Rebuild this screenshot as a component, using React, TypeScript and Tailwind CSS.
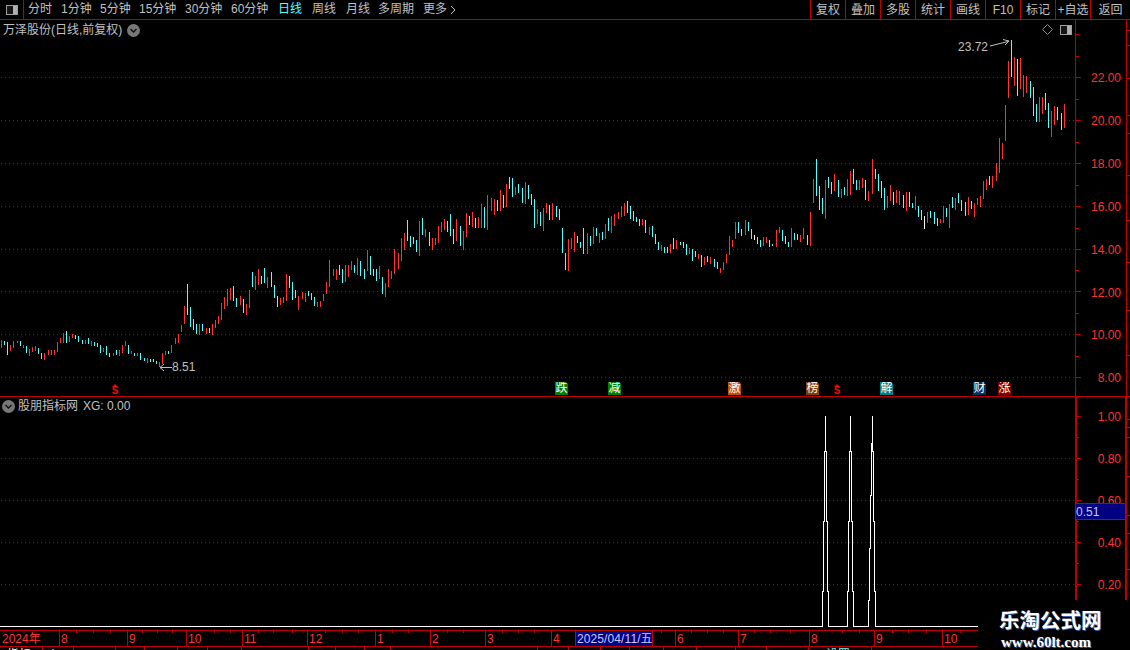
import React from "react";

const RED = "#ff3232";
const CYAN = "#54ffff";
const DOT = "#8c1010";

const seg1 =
  "4r480-503 13c484-496 22c487-525 31r495-513 40r483-503 52r484-488 61c483-497 70r495-503 79c497-519 88r507-527 97r502-517 106r498-513 115c504-521 124c519-537 133r519-540 145r510-525 154r510-525 163r510-525 172r487-516 181r474-489 190r459-489 199c453-489 208r468-486 217r462-474 226c465-477 235c468-486 247c480-492 256r480-492 265c474-492 274r483-498 283c486-498 292c489-501 301c495-519 310r504-516 319c498-525 328c519-531 340r519-528 349c510-525 358r510-528 367r495-519 376r483-498 385c495-522 394r513-522 403c519-528 412r519-528 421c519-540 433c534-543 442r534-549 451c537-546 460c537-546 469c543-552 478r546-561 487r519-552 496r513-525 505c513-522 514r495-519 526r474-492 535r462-489 544r435-456 553r378-432 562c312-405 571c381-441 580c417-450 589c432-462 598r432-465 607c432-453 619r444-462 628c444-459 637r432-465 646r420-444 655r408-432 664r369-420 673r351-387 682r327-378 691r324-360 700c318-363 709c354-381 721r348-375 730c357-399 739r372-405 748r330-384 757c276-321 766r288-330 775r267-315 784c288-312 793c264-309 802r291-324 814c276-321 823c315-354 832c348-381 841r354-375 850r351-369 859r282-363 868c288-324 877c306-360 886c330-354 895r348-390 907r336-357 916r339-366 925c333-348 934c339-360 943c351-378 952r366-381 961r363-381 970r342-363 979r306-342 988r240-321 1000r267-288 1009r267-300 1018c255-285 1027c267-309 1036r255-306 1045r255-291 1054r243-270 1063c255-279 1072r234-285 1081c243-288 1093c267-297 1102r210-273 1111c228-285 1120c267-288 1129c267-303 1138r258-297 1147c291-342 1156r309-351 1165r267-321 1174r273-297 1183r207-282 1195r219-267";

const seg2 =
  "4r234-303 13r219-270 22c180-243 31c228-261 40c231-252 49c240-276 58r183-288 67c174-225 76r207-231 87c216-258 97r234-270 106r234-255 115r198-249 124r186-216 133r177-210 142c183-216 151c162-228 160c207-252 169r177-243 181c198-258 190r213-270 199r159-231 208c168-195 217r156-201 226c174-204 235r171-204 244r132-204 253c141-204 262r105-210 274r114-153 283r117-165 292c120-153 301r90-153 310c105-144 319r72-141 328c51-87 337c54-111 346r81-105 355c72-99 367c84-129 376r66-132 385c75-117 394c102-135 403c117-204 412r147-192 421c156-198 430r144-213 439r129-159 448c135-180 457r129-180 469c138-171 478c147-180 487c204-279 496c279-330 505r237-333 514r234-267 523r216-276 532c228-249 541c246-264 550c204-282 562r219-282 571c228-258 580r201-252 589c204-228 598r219-249 607c216-240 616r192-237 625c174-213 634r168-219 643r162-198 655r156-177 664r138-171 673r129-168 682c123-159 691c138-177 700c153-183 709c171-186 718c177-198 727r177-195 736c180-219 748r201-225 757c198-231 766c222-252 775c246-270 784r255-273 793c261-279 802c261-279 811r252-279 820c234-267 829r240-267 841c246-255 850c246-264 859c252-285 868r264-282 877c267-303 886c273-291 895r282-297 904c285-321 913r291-315 922c288-306 931r291-312 943c297-321 952c306-327 961r324-339 970r306-330 979r282-309 988r228-285 997r240-261 1006r186-237 1015c186-219 1024c207-228 1036r180-225 1045c186-213 1054c207-237 1063w225-240 1072c231-252 1081c240-261 1090r231-258 1099r231-249 1108c240-261 1117c252-258 1129r210-261 1138r201-219 1147c210-243 1156c228-252 1165c246-261 1174r204-261 1183c219-240 1192c222-240";

const seg3 =
  "31r315-336 40r294-327 52c315-345 61r246-348 70r147-219 79c87-198 88c168-240 97c204-252 106r150-267 115c141-174 124c156-192 133r132-183 145c150-201 154r177-204 163c171-195 172r147-198 181r123-195 190c117-162 199c150-180 208r150-180 217r144-174 226c150-210 235r183-213 247r87-192 256c117-147 265c132-183 274c153-204 283c174-240 292r198-234 301r165-213 310c186-225 319r180-219 328r183-225 340c195-234 349r186-243 358c186-231 367c219-234 376r198-240 385c228-261 394c240-270 403w258-297 412r246-279 421c243-264 433c246-282 442c264-288 451r267-279 460r228-279 469c234-261 478r222-294 487c201-234 496r204-240 505c189-219 514c210-243 526c216-258 535r201-255 544c213-237 553r219-261 562r204-225 571r198-231 580r153-207 589r147-180 598c138-165 607r138-174 619r99-153 628r24-129 637r39-87";

const seg4 =
  "1005r105-141 1008r61-98 1011c40-77 1014r57-86 1017c59-96 1020r58-89 1023r75-97 1026r76-93 1030c81-98 1033c87-116 1036c104-122 1039r97-122 1042r97-114 1045c93-110 1048c103-128 1051r111-137 1054r106-125 1057c107-120 1061c113-130 1064r104-128";

type Bar = { x: number; y1: number; y2: number; c: string };

function parse(s: string, xo: number, yo: number, k: number): Bar[] {
  return s.split(" ").map((t) => {
    const m = t.match(/^(\d+)([rcw])(\d+)-(\d+)$/)!;
    const col = m[2] === "r" ? RED : m[2] === "c" ? CYAN : "#ffffff";
    return {
      x: Math.floor(xo + Number(m[1]) / k) + 0.5,
      y1: yo + Number(m[3]) / k,
      y2: yo + Number(m[4]) / k,
      c: col,
    };
  });
}

const bars: Bar[] = [
  ...parse(seg1, 0, 180, 3),
  ...parse(seg2, 400, 160, 3),
  ...parse(seg3, 790, 130, 3),
  ...parse(seg4, 0, 0, 1),
];

const upperGrid = [
  { y: 77, t: "22.00" },
  { y: 120, t: "20.00" },
  { y: 163, t: "18.00" },
  { y: 206, t: "16.00" },
  { y: 249, t: "14.00" },
  { y: 291.5, t: "12.00" },
  { y: 334, t: "10.00" },
  { y: 377, t: "8.00" },
];
const lowerGrid = [
  { y: 416, t: "1.00" },
  { y: 458, t: "0.80" },
  { y: 500, t: "0.60" },
  { y: 542, t: "0.40" },
  { y: 584, t: "0.20" },
];

const pulse = (a: number) => {
  const p = [
    [a - 3, 626.5],
    [a - 3, 591],
    [a - 2, 591],
    [a - 2, 521],
    [a - 1, 521],
    [a - 1, 451],
    [a, 451],
    [a, 416],
    [a, 451],
    [a + 1, 451],
    [a + 1, 521],
    [a + 2, 521],
    [a + 2, 591],
    [a + 3, 591],
    [a + 3, 626.5],
  ];
  return p.map((q) => q.join(",")).join(" ");
};
const line =
  "0,626.5 " +
  pulse(825.5) +
  " " +
  pulse(850.5) +
  " 868.5,626.5 868.5,600 869.5,600 869.5,548 870.5,548 870.5,495 871.5,495 871.5,443 872.5,443 872.5,416 872.5,451 873.5,451 873.5,521 874.5,521 874.5,591 875.5,591 875.5,626.5 978,626.5";

const menu = [
  { t: "分时", w: 33 },
  { t: "1分钟", w: 39 },
  { t: "5分钟", w: 39 },
  { t: "15分钟", w: 46 },
  { t: "30分钟", w: 46 },
  { t: "60分钟", w: 47 },
  { t: "日线", w: 34 },
  { t: "周线", w: 34 },
  { t: "月线", w: 32 },
  { t: "多周期", w: 45 },
  { t: "更多", w: 40 },
];
const tools = ["复权", "叠加", "多股", "统计", "画线", "F10", "标记", "+自选", "返回"];

const badges = [
  { t: "跌", x: 555, c: "bg-[#008000]" },
  { t: "减", x: 608, c: "bg-[#008000]" },
  { t: "激", x: 728, c: "bg-[#c04f10]" },
  { t: "榜", x: 806, c: "bg-[#804000]" },
  { t: "解", x: 880, c: "bg-[#008080]" },
  { t: "财", x: 973, c: "bg-[#003366]" },
  { t: "涨", x: 998, c: "bg-[#800000]" },
];

const months = [
  { t: "2024年", w: 59, first: true },
  { t: "8", w: 68 },
  { t: "9", w: 59 },
  { t: "10", w: 56 },
  { t: "11", w: 65 },
  { t: "12", w: 68 },
  { t: "1", w: 55 },
  { t: "2", w: 55 },
  { t: "3", w: 66 },
];
const monthsB = [
  { t: "6", w: 63 },
  { t: "7", w: 71 },
  { t: "8", w: 65 },
  { t: "9", w: 68 },
  { t: "10", w: 36 },
];
const minor = [76, 93, 110, 142, 157, 172, 214, 230, 258, 273, 292, 325, 342, 358, 392, 408, 447, 463, 502, 518, 534, 661, 691, 707, 723, 754, 770, 790, 842, 859, 892, 908, 926, 960];
const bottomSeps = [42, 73, 115, 144, 177, 207, 241, 308, 335, 364, 390, 537, 568, 600, 629, 663, 696, 735, 766, 808, 839, 871];

function Chevron() {
  return (
    <span className="flex h-[13px] w-[13px] items-center justify-center rounded-full bg-[#777777]">
      <svg width="9" height="9" viewBox="0 0 9 9">
        <path d="M1.5 3 L4.5 6 L7.5 3" fill="none" stroke="#111111" strokeWidth="1.4" />
      </svg>
    </span>
  );
}

function Toggle() {
  return (
    <svg width="12" height="10" viewBox="0 0 12 10" shapeRendering="crispEdges">
      <rect x="0.5" y="0.5" width="11" height="9" fill="#161616" stroke="#a0a0a0" />
      <rect x="7" y="1" width="4" height="8" fill="#b0b0b0" />
    </svg>
  );
}

function Axis({ grid, top, height, minorYs, thick, edge }: { grid: { y: number; t: string }[]; top: number; height: number; minorYs: number[]; thick: boolean; edge: number[] }) {
  return (
    <div className="relative w-[55px] shrink-0" style={{ height }}>
      <svg className="absolute inset-0" width="55" height={height} viewBox={`1075 ${top} 55 ${height}`} shapeRendering="crispEdges">
        <line x1={thick ? 1076 : 1075.5} x2={thick ? 1076 : 1075.5} y1={top} y2={top + height} stroke="#c00000" strokeWidth={thick ? 2 : 1} />
        <line x1={thick ? 1126 : 1126.5} x2={thick ? 1126 : 1126.5} y1={top} y2={top + height} stroke="#c00000" strokeWidth={thick ? 2 : 1} />
        {grid.map((g) => (
          <line key={g.t} x1="1076" x2="1081" y1={Math.floor(g.y) + 0.5} y2={Math.floor(g.y) + 0.5} stroke="#c00000" />
        ))}
        {minorYs.map((y) => (
          <line key={y} x1="1076" x2="1079" y1={y + 0.5} y2={y + 0.5} stroke="#c00000" />
        ))}
        {edge.map((y) => (
          <line key={y} x1="1127" x2="1130" y1={y + 0.5} y2={y + 0.5} stroke="#c00000" />
        ))}
      </svg>
      {grid.map((g) => (
        <span
          key={g.t}
          className="absolute right-[9px] text-[12px] leading-[14px] text-[#ff3232]"
          style={{ top: g.y - top - 6 }}
        >
          {g.t}
        </span>
      ))}
    </div>
  );
}

export default function App() {
  return (
    <div className="relative h-[650px] w-[1130px] overflow-hidden bg-black font-['Liberation_Sans','Noto_Sans_CJK_SC',sans-serif] text-[12px] text-[#c0c0c0]">
      {/* Top bar */}
      <div className="flex h-[20px] items-stretch border-b border-[#c00000]">
        <div className="flex w-[24px] shrink-0 items-center justify-center border-r border-[#c00000]">
          <Toggle />
        </div>
        <div className="flex items-center pl-[4px] leading-[19px]">
          {menu.map((m) => (
            <span
              key={m.t}
              className={`shrink-0 whitespace-nowrap ${m.t === "日线" ? "text-[#54ffff]" : ""}`}
              style={{ width: m.w }}
            >
              {m.t}
              {m.t === "更多" && (
                <svg className="ml-[3px] inline" width="6" height="10" viewBox="0 0 6 10">
                  <path d="M1 1 L5 5 L1 9" fill="none" stroke="#c0c0c0" />
                </svg>
              )}
            </span>
          ))}
        </div>
        <div className="ml-auto flex w-[320px] shrink-0">
          {tools.map((t) => (
            <span
              key={t}
              className="flex w-[35px] items-center justify-center whitespace-nowrap border-l border-[#c00000] last:w-[40px]"
            >
              {t}
            </span>
          ))}
        </div>
      </div>

      {/* Upper panel */}
      <div className="flex h-[377px] border-b border-[#c00000]">
        <div className="relative h-[376px] w-[1075px] shrink-0">
          <svg className="absolute inset-0" width="1075" height="376" viewBox="0 20 1075 376" shapeRendering="crispEdges">
            {upperGrid.map((g) => (
              <line key={g.y} x1="1" x2="1075" y1={Math.floor(g.y) + 0.5} y2={Math.floor(g.y) + 0.5} stroke={DOT} strokeDasharray="1 3" />
            ))}
            {bars.map((b, i) => (
              <line key={i} x1={b.x} x2={b.x} y1={b.y1} y2={b.y2} stroke={b.c} />
            ))}
            <g shapeRendering="auto" fill="none" stroke="#c0c0c0">
              <path d="M990 46 L1008 41.5 M1003 39.5 L1009 41 L1005 45" />
              <path d="M172 367.5 L160 367.5 M164 364 L160 367.5 L164 371" />
            </g>
          </svg>
          <div className="absolute left-[3px] top-[2px] flex items-center gap-[5px] leading-[16px]">
            <span>万泽股份(日线,前复权)</span>
            <Chevron />
          </div>
          <div className="absolute left-[1042px] top-[4px] flex items-center gap-[7px]">
            <svg width="11" height="11" viewBox="0 0 11 11">
              <path d="M5.5 0.5 L10.5 5.5 L5.5 10.5 L0.5 5.5 Z" fill="none" stroke="#8a8a8a" />
            </svg>
            <Toggle />
          </div>
          <span className="absolute left-[958px] top-[20px] leading-[14px]">23.72</span>
          <span className="absolute left-[172px] top-[340px] leading-[14px]">8.51</span>
          {badges.map((b) => (
            <span
              key={b.t}
              className={`absolute top-[362px] flex h-[13px] w-[13px] items-center justify-center text-[12px] leading-[13px] text-white [clip-path:polygon(0_0,85%_0,100%_15%,100%_100%,0_100%)] ${b.c}`}
              style={{ left: b.x }}
            >
              {b.t}
            </span>
          ))}
          {[115, 837].map((x) => (
            <span
              key={x}
              className="absolute top-[364px] flex w-[8px] flex-col items-center text-[10px] font-bold leading-[8px] text-[#ff0000]"
              style={{ left: x - 4 }}
            >
              <svg width="6" height="3" viewBox="0 0 6 3">
                <path d="M3 0 L6 3 L0 3 Z" fill="#ff0000" />
              </svg>
              <span>S</span>
            </span>
          ))}
        </div>
        <Axis
          grid={upperGrid}
          top={20}
          height={376}
          minorYs={[34, 56, 99, 142, 185, 228, 270, 313, 356]}
          thick={false}
          edge={[30, 45, 78, 115, 133, 175, 220, 262, 310, 355]}
        />
      </div>

      {/* Lower panel */}
      <div className="flex h-[233px]">
        <div className="relative h-[233px] w-[1075px] shrink-0">
          <svg className="absolute inset-0" width="1075" height="233" viewBox="0 397 1075 233" shapeRendering="crispEdges">
            {lowerGrid.slice(1).map((g) => (
              <line key={g.y} x1="1" x2="1075" y1={g.y + 0.5} y2={g.y + 0.5} stroke={DOT} strokeDasharray="1 3" />
            ))}
            <polyline points={line} fill="none" stroke="#ffffff" />
          </svg>
          <div className="absolute left-[2px] top-[1px] flex items-center gap-[3px] leading-[16px]">
            <Chevron />
            <span>股朋指标网</span>
            <span className="ml-[2px]">XG: 0.00</span>
          </div>
        </div>
        <div className="relative">
          <Axis
            grid={lowerGrid}
            top={397}
            height={233}
            minorYs={[437, 479, 521, 563, 605]}
            thick={true}
            edge={[419, 427, 437, 476, 515, 533, 569]}
          />
          <span className="absolute left-[1px] top-[106px] flex h-[17px] w-[49px] items-center border-y border-[#c00000] bg-[#000080] text-[12px] leading-[14px] text-[#c8c8ff]">
            0.51
          </span>
        </div>
      </div>

      {/* Time axis */}
      <div className="relative flex h-[17px] w-[978px] items-stretch border-y border-[#c00000] text-[12px] leading-[17px] text-[#ff3232]">
        {minor.map((x) => (
          <i key={x} className="absolute top-0 h-[2px] w-px bg-[#c00000]" style={{ left: x }} />
        ))}
        {months.map((m, i) => (
          <span
            key={i}
            className={`shrink-0 ${m.first ? "pl-[2px]" : "border-l border-[#c00000] pl-[1px]"}`}
            style={{ width: m.w }}
          >
            {m.t}
          </span>
        ))}
        <span className="w-[24px] shrink-0 border-l border-[#c00000] pl-[1px]">4</span>
        <span className="w-[78px] shrink-0 whitespace-nowrap border-x border-[#c00000] bg-[#000080] pl-[1px] tracking-[0.1px] text-[#c8c8ff]">
          2025/04/11/五
        </span>
        <span className="w-[22px] shrink-0" />
        {monthsB.map((m, i) => (
          <span key={i} className="shrink-0 border-l border-[#c00000] pl-[1px]" style={{ width: m.w }}>
            {m.t}
          </span>
        ))}
      </div>

      {/* Clipped row under the time axis */}
      <div className="relative h-[3px] w-[978px] overflow-hidden leading-[14px] text-white">
        {bottomSeps.map((x) => (
          <i key={x} className="absolute top-0 h-[3px] w-px bg-[#c00000]" style={{ left: x }} />
        ))}
        <span className="absolute left-[7px] top-[1px]">指标</span>
        <span className="absolute left-[48px] top-[1px]">卜</span>
        <span className="absolute left-[826px] top-[1px] text-[#54ffff]">设置</span>
      </div>

      {/* Watermark */}
      <div className="absolute left-[978px] top-[600px] flex h-[50px] w-[152px] flex-col items-start bg-black pl-[21px] pt-[8px] font-['Liberation_Serif','Noto_Sans_CJK_SC',serif] font-bold text-white [text-shadow:1px_1px_0_#3a5fa8]">
        <span className="whitespace-nowrap text-[20.5px] leading-[26px]">乐淘公式网</span>
        <span className="ml-[2px] whitespace-nowrap text-[15px] leading-[16px]">www.60lt.com</span>
      </div>
    </div>
  );
}
